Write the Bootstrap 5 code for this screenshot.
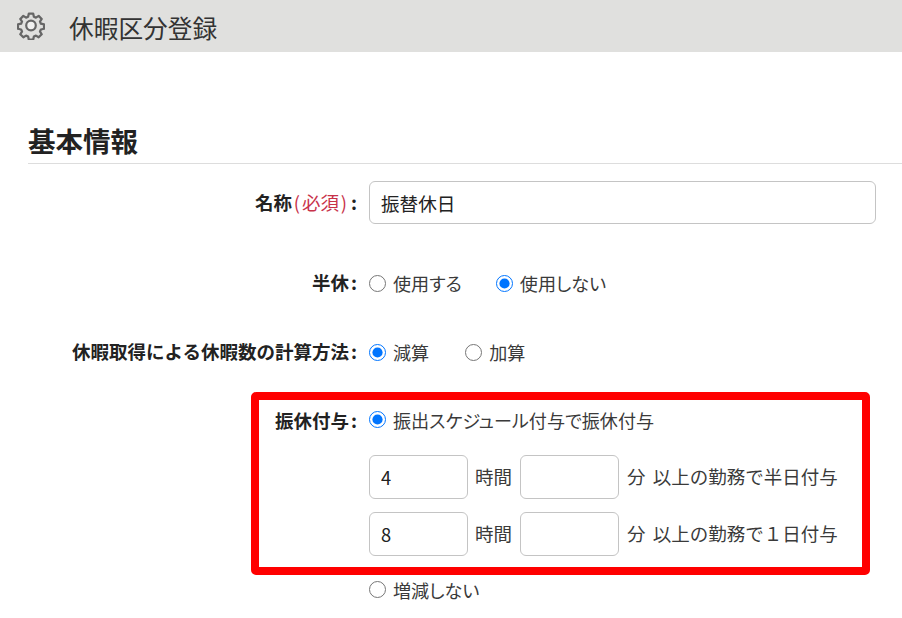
<!DOCTYPE html>
<html lang="ja">
<head>
<meta charset="utf-8">
<title>休暇区分登録</title>
<link href="https://cdn.jsdelivr.net/npm/bootstrap@5.3.0/dist/css/bootstrap.min.css" rel="stylesheet">
<style>
html,body{height:100%;overflow:hidden}
body{position:relative;font-family:"Noto Sans CJK JP","Liberation Sans",sans-serif;font-size:18.1px;color:#3a3a3a;background:#fff}
.top-strip{height:52px;background:#e0e0de;padding-left:17px}
.top-strip svg{width:28px;height:28px;margin-right:24px;flex:none}
.top-title{font-size:24.7px;font-weight:400;margin:2px 0 0;color:#333;line-height:1}
.sheet{padding:72px 0 0 28px}
.sec-head{font-size:27.5px;font-weight:700;color:#222;margin:0;line-height:1;padding-top:3px;border-bottom:1px solid #ddd;height:40px;box-sizing:border-box}
.f-row{display:flex;align-items:center}
.f-label{width:329px;flex:none;text-align:right;font-weight:700;font-size:18.5px;color:#222;margin:0}
.cl{margin-left:2px}
.f-body{margin-left:12px;flex:1;min-width:0;padding-right:26px}
.req{color:#c8324a;font-weight:400}
.req i{font-style:normal;display:inline-block;width:10px;text-align:center}
.name-input{height:43px;font-size:18.6px;padding:0 11px;border-color:#c4c4c4;border-radius:6px;color:#222}
.num-input{width:99px;height:44px;font-size:18.3px;padding:0 11px;border-color:#c4c4c4;border-radius:6px;color:#222;flex:none}
.rd{display:inline-flex;align-items:center;line-height:1;font-feature-settings:"palt"}
.rd .form-check-input{appearance:auto;-webkit-appearance:auto;accent-color:#0075ff;background-image:none;width:17px;height:17px;margin:0 7px 0 0;float:none;border:0;flex:none}
.gap-first{margin-right:34px}
.gap-second{margin-right:36px}
.row-a{margin-top:17px}
.row-b{margin-top:39px;height:40px}
.row-c{margin-top:29px;height:40px}
.row-d{margin-top:29px;height:40px}
.time-line{display:flex;align-items:center;margin-top:13px}
.time-line .num-input + .unit{margin:0 8px 0 7px}
.time-one{margin-top:14px}
.unit{flex:none;white-space:nowrap;font-size:18.5px}
.tail{word-spacing:3px}
.time-line .num-input + .unit.tail{margin:0 0 0 8px}
.row-e{margin-top:15px;height:40px}
.frame{position:absolute;left:251px;top:392px;width:619px;height:183px;border:8px solid #f00;border-radius:5px;pointer-events:none}
</style>
</head>
<body>
<header class="top-strip d-flex align-items-center">
<svg viewBox="0 0 28 28" fill="none" stroke="#666" stroke-width="2.5" stroke-linejoin="round"><path d="M11.6 1.5h4.8l.8 3.5 2.3 1 3-1.9 3.4 3.4-1.9 3 1 2.3 3.5.8v4.8l-3.5.8-1 2.3 1.9 3-3.4 3.4-3-1.9-2.3 1-.8 3.5h-4.8l-.8-3.5-2.3-1-3 1.9-3.4-3.4 1.9-3-1-2.3-3.5-.8v-4.8l3.5-.8 1-2.3-1.9-3 3.4-3.4 3 1.9 2.3-1z" transform="translate(1.4 .2) scale(.9)"/><circle cx="14" cy="13.5" r="4.8" fill="#f1f1f0" stroke-width="2.2"/></svg>
<h1 class="top-title">休暇区分登録</h1>
</header>
<main class="sheet">
<h2 class="sec-head">基本情報</h2>
<div class="f-row row-a">
<label class="f-label">名称<span class="req"><i>(</i>必須<i>)</i></span><span class="cl">:</span></label>
<div class="f-body"><input type="text" class="form-control name-input" value="振替休日"></div>
</div>
<div class="f-row row-b">
<label class="f-label">半休<span class="cl">:</span></label>
<div class="f-body d-flex align-items-center">
<label class="rd gap-first"><input class="form-check-input" type="radio" name="h">使用する</label>
<label class="rd"><input class="form-check-input" type="radio" name="h" checked>使用しない</label>
</div>
</div>
<div class="f-row row-c">
<label class="f-label">休暇取得による休暇数の計算方法<span class="cl">:</span></label>
<div class="f-body d-flex align-items-center">
<label class="rd gap-second"><input class="form-check-input" type="radio" name="c" checked>減算</label>
<label class="rd"><input class="form-check-input" type="radio" name="c">加算</label>
</div>
</div>
<div class="f-row row-d">
<label class="f-label">振休付与<span class="cl">:</span></label>
<div class="f-body"><label class="rd"><input class="form-check-input" type="radio" name="g" checked>振出スケジュール付与で振休付与</label></div>
</div>
<div class="f-row">
<div class="f-label"></div>
<div class="f-body">
<div class="time-line time-one">
<input type="text" class="form-control num-input" value="4"><span class="unit">時間</span>
<input type="text" class="form-control num-input" value=""><span class="unit tail">分 以上の勤務で半日付与</span>
</div>
<div class="time-line">
<input type="text" class="form-control num-input" value="8"><span class="unit">時間</span>
<input type="text" class="form-control num-input" value=""><span class="unit tail">分 以上の勤務で１日付与</span>
</div>
</div>
</div>
<div class="f-row row-e">
<div class="f-label"></div>
<div class="f-body"><label class="rd"><input class="form-check-input" type="radio" name="g">増減しない</label></div>
</div>
</main>
<div class="frame"></div>
<script src="https://cdn.jsdelivr.net/npm/bootstrap@5.3.0/dist/js/bootstrap.bundle.min.js"></script>
</body>
</html>
